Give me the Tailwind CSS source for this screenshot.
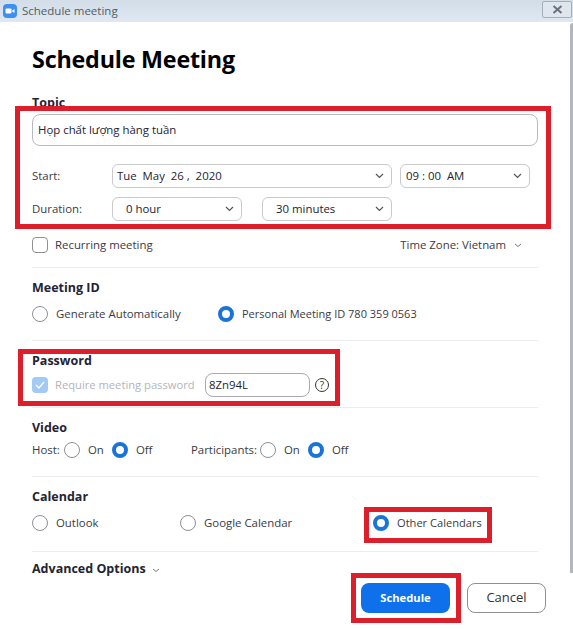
<!DOCTYPE html>
<html lang="en">
<head>
    <meta charset="UTF-8">
    <meta name="viewport" content="width=device-width, initial-scale=1.0">
    <title>Schedule meeting</title>
    <script src="https://cdn.jsdelivr.net/npm/@tailwindcss/browser@4"></script>
</head>
<body class="bg-white font-['Open_Sans','Noto_Sans',sans-serif] text-[11.4px] text-[#3a3a45] overflow-hidden">
<div class="relative w-[573px] h-[629px] overflow-hidden">

    <!-- Title bar -->
    <header class="h-[22px] flex items-center pl-[3px] bg-gradient-to-b from-[#d3dde8] to-[#dfe8f2]">
        <svg width="14" height="14" viewBox="0 0 14 14"><rect width="14" height="14" rx="4" fill="#3d8ff0"/><rect x="2.5" y="4.5" width="6" height="5" rx="1" fill="#fff"/><path d="M9.2 6.5 11.5 5v4L9.2 7.5z" fill="#fff"/></svg>
        <span class="ml-[5px] text-[11.5px] text-[#555b63]">Schedule meeting</span>
        <div class="ml-auto mr-[1px] mb-[3px] w-[30px] h-[17px] border border-[#a3aeba] rounded-[2px] flex items-center justify-center bg-[#dfe6ee]">
            <svg width="11" height="9" viewBox="0 0 11 9"><path d="M1.5 1 9.5 8M9.5 1 1.5 8" stroke="#6a717b" stroke-width="2" fill="none"/></svg>
        </div>
    </header>

    <main class="pl-[32px] w-[538px]">
        <h1 class="mt-[20px] h-[34px] leading-[34px] text-[23.3px] font-bold text-black tracking-[-0.2px]">Schedule Meeting</h1>

        <h2 class="mt-[17px] h-5 leading-5 text-[12.5px] font-bold text-[#232333]">Topic</h2>
        <div class="mt-[1px] h-[32px] border border-[#b9b9c0] rounded-[8px] flex items-center pl-[5px] text-[#232333]">Họp chất lượng hàng tuần</div>

        <div class="mt-[18px] h-6 flex items-center">
            <span class="w-[80px]">Start:</span>
            <div class="w-[280px] h-6 border border-[#c9c9ce] rounded-[6px] flex items-center justify-between pl-[4px] pr-[7px] text-[#232333]">
                <span class="whitespace-pre">Tue  May  26 ,  2020</span>
                <svg width="9" height="6" viewBox="0 0 9 6"><path d="M1 1l3.5 3.5L8 1" stroke="#555" stroke-width="1.2" fill="none"/></svg>
            </div>
            <div class="ml-[8px] w-[130px] h-6 border border-[#c9c9ce] rounded-[6px] flex items-center justify-between pl-[5px] pr-[7px] text-[#232333]">
                <span class="whitespace-pre">09 : 00  AM</span>
                <svg width="9" height="6" viewBox="0 0 9 6"><path d="M1 1l3.5 3.5L8 1" stroke="#555" stroke-width="1.2" fill="none"/></svg>
            </div>
        </div>

        <div class="mt-[9px] h-6 flex items-center">
            <span class="w-[80px]">Duration:</span>
            <div class="w-[130px] h-6 border border-[#c9c9ce] rounded-[6px] flex items-center justify-between pl-[13px] pr-[7px] text-[#232333]">
                <span>0 hour</span>
                <svg width="9" height="6" viewBox="0 0 9 6"><path d="M1 1l3.5 3.5L8 1" stroke="#555" stroke-width="1.2" fill="none"/></svg>
            </div>
            <div class="ml-[20px] w-[130px] h-6 border border-[#c9c9ce] rounded-[6px] flex items-center justify-between pl-[13px] pr-[7px] text-[#232333]">
                <span>30 minutes</span>
                <svg width="9" height="6" viewBox="0 0 9 6"><path d="M1 1l3.5 3.5L8 1" stroke="#555" stroke-width="1.2" fill="none"/></svg>
            </div>
        </div>

        <div class="mt-[16px] h-4 flex items-center">
            <span class="w-4 h-4 border border-[#8f8f96] rounded-[4px]"></span>
            <span class="ml-[7px]">Recurring meeting</span>
            <span class="ml-auto">Time Zone: Vietnam</span>
            <svg class="ml-[8px] mr-[16px]" width="8" height="5" viewBox="0 0 8 5"><path d="M1 1l3 2.5L7 1" stroke="#777" stroke-width="1" fill="none"/></svg>
        </div>
        <hr class="mt-[14px] border-[#ededf0]">

        <h2 class="mt-[10px] h-5 leading-5 text-[12.5px] font-bold text-[#232333]">Meeting ID</h2>
        <div class="mt-[8px] h-4 flex items-center">
            <span class="w-4 h-4 rounded-full border border-[#8f8f96]"></span>
            <span class="ml-[8px] w-[162px]">Generate Automatically</span>
            <span class="w-4 h-4 rounded-full border-[4px] border-[#1a73d9]"></span>
            <span class="ml-[8px] text-[11px]">Personal Meeting ID 780 359 0563</span>
        </div>
        <hr class="mt-[18px] border-[#ededf0]">

        <h2 class="mt-[10px] h-5 leading-5 text-[12.5px] font-bold text-[#232333]">Password</h2>
        <div class="mt-[2px] h-6 flex items-center">
            <span class="w-4 h-4 rounded-[4px] bg-[#a3c9f5] flex items-center justify-center">
                <svg width="10" height="8" viewBox="0 0 10 8"><path d="M1 4l3 3 5-6" stroke="#fff" stroke-width="1.4" fill="none"/></svg>
            </span>
            <span class="ml-[7px] w-[150px] text-[11.2px] text-[#b4b4ba]">Require meeting password</span>
            <div class="w-[105px] h-6 border border-[#a9a9b0] rounded-[8px] flex items-center pl-[3px] text-[#232333]">8Zn94L</div>
            <span class="ml-[5px] w-[14px] h-[14px] rounded-full border border-[#333] flex items-center justify-center text-[10px] leading-none text-[#333]">?</span>
        </div>
        <hr class="mt-[10px] border-[#ededf0]">

        <h2 class="mt-[10px] h-5 leading-5 text-[12.5px] font-bold text-[#232333]">Video</h2>
        <div class="mt-[4px] h-4 flex items-center">
            <span class="w-[32px]">Host:</span>
            <span class="w-4 h-4 rounded-full border border-[#8f8f96]"></span>
            <span class="ml-[8px] w-[16px]">On</span>
            <span class="ml-[8px] w-4 h-4 rounded-full border-[4px] border-[#1a73d9]"></span>
            <span class="ml-[8px] w-[55px]">Off</span>
            <span class="w-[69px]">Participants:</span>
            <span class="w-4 h-4 rounded-full border border-[#8f8f96]"></span>
            <span class="ml-[8px] w-[16px]">On</span>
            <span class="ml-[8px] w-4 h-4 rounded-full border-[4px] border-[#1a73d9]"></span>
            <span class="ml-[8px]">Off</span>
        </div>
        <hr class="mt-[18px] border-[#ededf0]">

        <h2 class="mt-[10px] h-5 leading-5 text-[12.5px] font-bold text-[#232333]">Calendar</h2>
        <div class="mt-[8px] h-4 flex items-center">
            <span class="w-4 h-4 rounded-full border border-[#8f8f96]"></span>
            <span class="ml-[8px] w-[124px]">Outlook</span>
            <span class="w-4 h-4 rounded-full border border-[#8f8f96]"></span>
            <span class="ml-[8px] w-[169px]">Google Calendar</span>
            <span class="w-4 h-4 rounded-full border-[4px] border-[#1a73d9]"></span>
            <span class="ml-[8px] text-[11.1px]">Other Calendars</span>
        </div>
        <hr class="mt-[20px] border-[#ededf0]">

        <div class="mt-[7px] h-5 flex items-center">
            <h2 class="text-[12.5px] font-bold text-[#232333]">Advanced Options</h2>
            <svg class="ml-[6px] mt-[2px]" width="8" height="5" viewBox="0 0 8 5"><path d="M1 1l3 2.5L7 1" stroke="#777" stroke-width="1" fill="none"/></svg>
        </div>

        <div class="mt-[4px] w-[514px] flex justify-end gap-[17px]">
            <button class="w-[89px] h-[30px] rounded-[8px] bg-[#0e71eb] text-white font-bold text-[11.2px]">Schedule</button>
            <button class="w-[79px] h-[30px] rounded-[8px] border border-[#8f8f96] text-[13px] text-[#333]">Cancel</button>
        </div>
    </main>

    <!-- Window edge -->
    <div class="absolute left-[570px] top-[23px] w-[3px] h-[550px] bg-[#b3b6bd] rounded-tl-[3px]"></div>

    <!-- Red annotation boxes drawn over the dialog -->
    <div class="absolute left-[15px] top-[106px] w-[536px] h-[123px] border-[5px] border-[#dc1f2b]"></div>
    <div class="absolute left-[18px] top-[349px] w-[322px] h-[57px] border-[5px] border-[#dc1f2b]"></div>
    <div class="absolute left-[364px] top-[507px] w-[128px] h-[36px] border-[5px] border-[#dc1f2b]"></div>
    <div class="absolute left-[351px] top-[573px] w-[110px] h-[50px] border-[5px] border-[#dc1f2b]"></div>
</div>
</body>
</html>
